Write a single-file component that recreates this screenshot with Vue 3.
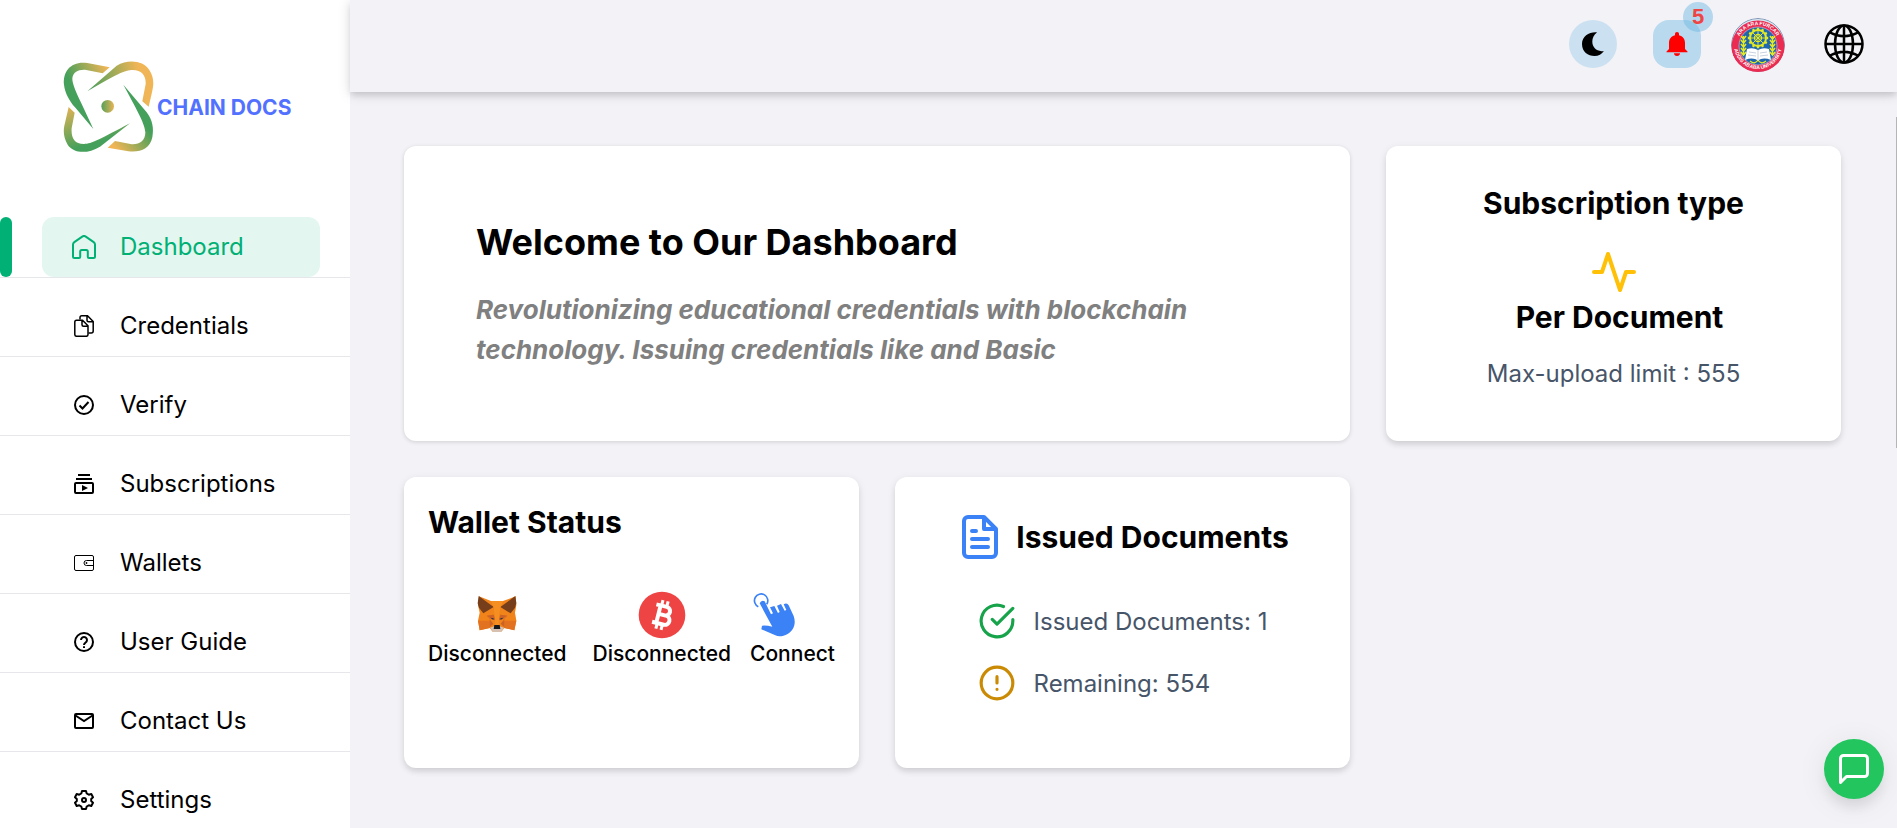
<script setup>
import { ref } from 'vue'

const active = ref('Dashboard')
const items = ['Dashboard', 'Credentials', 'Verify', 'Subscriptions', 'Wallets', 'User Guide', 'Contact Us', 'Settings']
const spokes = [0, 45, 90, 135]
const teeth = [0, 30, 60, 90, 120, 150, 180, 210, 240, 270, 300, 330]
const grains = [18, 22, 26, 30, 34]
</script>

<template>
  <div class="layout">
    <aside class="sidebar">
      <a class="brand" href="#">
        <svg class="brand-mark" viewBox="186 58 282 282" aria-hidden="true">
          <defs>
            <linearGradient id="g-a" gradientUnits="userSpaceOnUse" x1="200" y1="150" x2="325" y2="85">
              <stop offset=".15" stop-color="#44a05a" /><stop offset="1" stop-color="#f0b556" />
            </linearGradient>
            <linearGradient id="g-b" gradientUnits="userSpaceOnUse" x1="270" y1="150" x2="440" y2="110">
              <stop offset="0" stop-color="#4b9f5a" /><stop offset=".9" stop-color="#f0b556" />
            </linearGradient>
            <linearGradient id="g-c" gradientUnits="userSpaceOnUse" x1="440" y1="240" x2="345" y2="320">
              <stop offset=".1" stop-color="#44a05a" /><stop offset="1" stop-color="#f0b556" />
            </linearGradient>
            <linearGradient id="g-d" gradientUnits="userSpaceOnUse" x1="205" y1="200" x2="240" y2="320">
              <stop offset="0" stop-color="#e0b255" /><stop offset="1" stop-color="#44a05a" />
            </linearGradient>
            <linearGradient id="g-e"><stop offset="0" stop-color="#55a159" /><stop offset="1" stop-color="#e9b456" /></linearGradient>
          </defs>
          <path fill="url(#g-a)" d="M329 80 262 67C215 60 188 90 192 132C195 158 208 180 225 200L280 265L244 188C228 155 217 128 217 115C217 95 235 86 255 87L308 98Z" />
          <path fill="url(#g-b)" d="M262 152 350 75C385 55 430 60 448 88C462 110 462 130 456 155L446 198L427 182L437 130C438 105 425 88 398 88C375 88 350 100 262 152Z" />
          <path fill="url(#g-c)" d="M370 132 440 215C458 240 462 262 457 290C450 325 420 336 385 332L323 321L345 301L395 311C420 312 436 300 436 275C434 250 420 225 370 132Z" />
          <path fill="url(#g-d)" d="M390 248 300 318C260 342 220 337 203 312C190 290 190 270 193 255L206 199L224 216L215 262C213 290 222 310 252 310C275 310 300 295 390 248Z" />
          <circle cx="323" cy="197" r="19" fill="url(#g-e)" />
        </svg>
        <span>CHAIN DOCS</span>
      </a>

      <nav>
        <ul class="menu">
          <li v-for="item in items" :key="item" :class="{ active: item === active }">
            <a href="#" @click.prevent="active = item">
              <svg v-if="item === 'Dashboard'" class="icon home" viewBox="0 0 24 24">
                <path d="M1 9.6Q1 8 2.3 7.1L10.6 1.4Q12 .5 13.4 1.4L21.7 7.1Q23 8 23 9.6V21.5Q23 23 21.5 23H17Q15.8 23 15.8 21.8V16.5Q15.8 15 14.3 15H9.7Q8.200 15 8.200 16.5V21.800Q8.200 23 7 23H2.500Q1 23 1 21.500Z" />
              </svg>
              <svg v-else-if="item === 'Credentials'" class="icon thin" viewBox="0 0 20 22">
                <path d="M6 4.500V2.500Q6 .8 7.700.8H13.500L19.200 6.500V16Q19.200 18 17.300 18H14.500M13 1V5.200Q13 6.700 14.500 6.700H19" />
                <path d="M2.500 5.200H8.500L14 10.700V19.500Q14 21.300 12.200 21.300H2.700Q.8 21.300.8 19.500V7Q.8 5.200 2.500 5.200ZM8 5.400V9.700Q8 11.200 9.500 11.200H13.800" />
              </svg>
              <svg v-else-if="item === 'Verify'" class="icon" viewBox="0 0 20 20">
                <circle cx="10" cy="10" r="9" /><path d="M5.500 10.500 8.500 13.500 14.500 7" />
              </svg>
              <svg v-else-if="item === 'Subscriptions'" class="icon" viewBox="0 0 20 20">
                <path d="M4 1H16M2 5H18" /><rect x="1" y="9" width="18" height="10" rx="1" /><path class="solid" d="M8 11 14 14 8 17Z" />
              </svg>
              <svg v-else-if="item === 'Wallets'" class="icon fine" viewBox="0 0 20 20">
                <rect x=".5" y="2.500" width="19" height="15" rx="1.500" /><path d="M19.500 7.500H12.500A2.500 2.500 0 0 0 12.500 12.500H19.500" /><circle class="solid" cx="12.500" cy="10" r=".9" />
              </svg>
              <svg v-else-if="item === 'User Guide'" class="icon" viewBox="0 0 20 20">
                <circle cx="10" cy="10" r="9" /><path d="M7 8A3 3 0 1 1 11.500 10.600Q10 11.500 10 13" /><path d="M10 14.200V16" />
              </svg>
              <svg v-else-if="item === 'Contact Us'" class="icon" viewBox="0 0 20 20">
                <rect x="1" y="3" width="18" height="14" rx="1" /><path d="M1.500 4.500 10 10 18.500 4.500" />
              </svg>
              <svg v-else class="icon" viewBox="0 0 20 20">
                <path stroke-linejoin="round" d="M8 1H12L12.700 3.500 14.800 4.700 17.300 4 19 7.300 17.200 9V11L19 12.700 17.300 16 14.800 15.300 12.700 16.500 12 19H8L7.300 16.500 5.200 15.300 2.700 16 1 12.700 2.800 11V9L1 7.300 2.700 4 5.200 4.700 7.300 3.500Z" /><circle cx="10" cy="10" r="2" />
              </svg>
              <span>{{ item }}</span>
            </a>
          </li>
        </ul>
      </nav>
    </aside>

    <div class="page">
      <header class="topbar">
        <button class="round moon" aria-label="Dark mode">
          <svg viewBox="0 0 24 24"><path d="M16 .4C8.500-.3 1 4.200 1 12S7 24 13.500 24C17.500 24 21 22 22.900 18.900C16 20.300 11.300 15.500 11.300 9.600C11.300 6 13 2.500 16 .4Z" /></svg>
        </button>
        <button class="round bell" aria-label="Notifications">
          <svg viewBox="0 0 24 24"><path d="M12 24Q14.800 24 15 21.300H9Q9.200 24 12 24ZM20 17V11C20 7 17.800 4.200 14 3.300V1.800Q14 0 12 0T10 1.800V3.300C6.200 4.200 4 7 4 11V17L1.500 19.500V20.300H22.500V19.500Z" /></svg>
          <span class="badge">5</span>
        </button>
        <button class="avatar" aria-label="Profile">
          <svg viewBox="0 0 54 54">
            <defs>
              <path id="arc-top" d="M6 28A21 21 0 0 1 48 28" />
              <path id="arc-bottom" d="M3 27A24 24 0 0 0 51 27" />
            </defs>
            <circle cx="27" cy="27" r="26.500" fill="#d8e8f2" stroke="#35588a" stroke-width=".6" />
            <circle cx="27" cy="29" r="26.500" fill="#ea2c52" />
            <circle cx="27" cy="28" r="19" fill="#1e66ad" stroke="#d9d2e4" stroke-width=".6" />
            <text class="seal-text"><textPath href="#arc-top" startOffset="50%">ARA ARA FURCAR</textPath></text>
            <text class="seal-text"><textPath href="#arc-bottom" startOffset="50%">ADDIS ABABA UNIVERSITY</textPath></text>
            <g stroke="#e4ea25" fill="none">
              <circle cx="27" cy="20" r="8" stroke-width="2" />
              <path v-for="t in teeth" :key="t" d="M27 9.800V12" stroke-width="2.400" :transform="`rotate(${t} 27 20)`" />
              <path v-for="s in spokes" :key="s" d="M27 13V27" stroke-width=".9" :transform="`rotate(${s} 27 20)`" />
              <circle cx="27" cy="20" r="3.500" stroke-width="1.300" />
              <path v-for="g in grains" :key="g" stroke-width="1.700" :d="`M10 ${g}L12.500 ${g + 3}L15 ${g}M39 ${g}L41.500 ${g + 3}L44 ${g}`" />
              <path d="M12.500 18V36M41.500 18V36M19 43Q24 47 27 42Q30 47 35 43" stroke-width="1.300" />
            </g>
            <path d="M16 31Q22 29 27 32Q32 29 38 31L40 42Q32 39 27 42.500Q22 39 14 42Z" fill="#fff" />
            <path d="M27 32V42M18 34 25 35M17 37 25 38M29 35 36 34M29 38 37 37" stroke="#9fb4c8" stroke-width=".6" fill="none" />
          </svg>
        </button>
        <button class="globe" aria-label="Language">
          <svg viewBox="0 0 48 48">
            <circle cx="24" cy="24" r="18.500" /><ellipse cx="24" cy="24" rx="9" ry="18.500" />
            <path d="M24 5.500V42.500M5.500 24H42.500M10 12.500Q24 20 38 12.500M10 35.500Q24 28 38 35.500" />
          </svg>
        </button>
      </header>

      <main class="cards">
        <section class="card welcome">
          <h1>Welcome to Our Dashboard</h1>
          <p>Revolutionizing educational credentials with blockchain technology. Issuing credentials like and Basic</p>
        </section>

        <section class="card subscription">
          <h2>Subscription type</h2>
          <svg class="line pulse" viewBox="0 0 24 24"><path d="M22 12H18L15 21 9 3 6 12H2" /></svg>
          <h2 class="plan">Per Document</h2>
          <p>Max-upload limit : 555</p>
        </section>

        <section class="card wallet">
          <h2>Wallet Status</h2>
          <div class="wallets">
            <div class="pair">
              <div class="status">
                <svg viewBox="252 393 144 144">
                  <path fill="#f08319" d="M270 409 306 423H342L380 409 382 435 378 458 382 482 376 511 346 504 337 515H311L302 504 272 511 267 482 272 458 267 435Z" />
                  <path fill="#763e1a" d="M269 408 314 441 283 460 270 443 266 430ZM379 408 334 441 365 460 378 443 382 430Z" />
                  <path fill="#e2721f" d="M267 482H302V504L272 511ZM382 482H346V504L376 511ZM293 467 314 464 319 480 302 478ZM355 467 334 464 329 480 346 478Z" />
                  <path fill="#f58f22" d="M314 441 306 423H342L334 441 331 464 329 497H319L317 464Z" />
                  <path fill="#cc6228" d="M293 467 314 464 318 481ZM355 467 334 464 330 481ZM302 478 313 491 302 502ZM346 478 335 491 346 502Z" />
                  <path fill="#2b3443" d="M304 473 314 475 313 480ZM344 473 334 475 335 480Z" />
                  <path fill="#d7c1b3" d="M303 503 316 499H332L345 503 336 516H312Z" />
                  <path fill="#17191c" d="M316 495H332L334 507H314Z" />
                </svg>
                <span>Disconnected</span>
              </div>
              <div class="status">
                <svg viewBox="747 393 144 144">
                  <circle cx="819" cy="465" r="70" fill="#ef4444" />
                  <g transform="rotate(14 819 465)" fill="none" stroke="#fff" stroke-width="12">
                    <path d="M808 438V492M795 438H827A13 13 0 0 1 827 464H808M827 464H831A14 14 0 0 1 831 492H795" />
                    <path d="M811 421V438M827 421V438M811 492V509M827 492V509" stroke-width="9" />
                  </g>
                </svg>
                <span>Disconnected</span>
              </div>
            </div>
            <button class="status connect">
              <svg viewBox="1074 393 144 144">
                <path fill="none" stroke="#3b82f6" stroke-width="5" d="M1099 440A20 20 0 1 1 1124 433" />
                <path fill="#3b82f6" d="M1103 430Q1108 419 1118 424L1137 463 1143 460 1134 442 1147 438 1158 459 1163 456 1155 437 1167 432 1178 452 1183 450 1175 433Q1185 427 1190 436L1205 468C1213 490 1205 512 1188 521C1172 530 1160 531 1150 526L1108 508 1110 497Q1125 496 1141 500Z" />
              </svg>
              <span>Connect</span>
            </button>
          </div>
        </section>

        <section class="card issued">
          <div class="issued-head">
            <svg class="line file" viewBox="0 0 24 24"><path d="M14 2H6A2 2 0 0 0 4 4V20A2 2 0 0 0 6 22H18A2 2 0 0 0 20 20V8ZM14 2V8H20M16 13H8M16 17H8M10 9H8" /></svg>
            <h2>Issued Documents</h2>
          </div>
          <ul>
            <li>
              <svg class="line ok" viewBox="0 0 24 24"><path d="M22 11.080V12A10 10 0 1 1 16.070 2.860M22 4 12 14.010 9 11.010" /></svg>
              <span>Issued Documents: 1</span>
            </li>
            <li>
              <svg class="line warn" viewBox="0 0 24 24"><circle cx="12" cy="12" r="10" /><path d="M12 8V12M12 16H12.010" /></svg>
              <span>Remaining: 554</span>
            </li>
          </ul>
        </section>
      </main>
    </div>

    <div class="scroll-thumb"></div>
    <button class="chat" aria-label="Open chat">
      <svg viewBox="0 0 24 24"><path d="M21 15A2 2 0 0 1 19 17H7L3 21V5A2 2 0 0 1 5 3H19A2 2 0 0 1 21 5Z" /></svg>
    </button>
  </div>
</template>

<style>
body {
  margin: 0;
  background: #f3f2f7;
}
</style>

<style scoped>
.layout {
  display: flex;
  height: 100vh;
  overflow: hidden;
  font-family: Inter, "Liberation Sans", sans-serif;
  color: #000;
  background: #f3f2f7;
}
h1, h2, p, ul {
  margin: 0;
  padding: 0;
}
ul {
  list-style: none;
}
button {
  border: 0;
  padding: 0;
  background: none;
  font: inherit;
  color: inherit;
  cursor: pointer;
}
svg {
  display: block;
  flex: none;
}
a {
  color: inherit;
  text-decoration: none;
}

.sidebar {
  flex: none;
  width: 350px;
  background: #fff;
}
.brand {
  display: flex;
  align-items: center;
  gap: 1px;
  height: 94px;
  padding: 60px 0 63px 62px;
  font-size: 21px;
  font-weight: 700;
  color: #5271ff;
}
.brand-mark {
  width: 94px;
  height: 94px;
}
.menu li {
  position: relative;
  margin-bottom: 18px;
  padding: 0 30px 0 42px;
  border-bottom: 1px solid #e5e7eb;
}
.menu a {
  display: flex;
  align-items: center;
  gap: 24px;
  height: 60px;
  padding-left: 30px;
  border-radius: 12px;
  font-size: 24px;
  line-height: 36px;
  font-weight: 400;
}
.menu .active::before {
  content: "";
  position: absolute;
  left: 0;
  top: 0;
  width: 12px;
  height: 60px;
  border-radius: 6px;
  background: #00b074;
}
.menu .active a {
  color: #00b074;
  background: #e3f6f0;
}
.icon {
  width: 20px;
  height: 22px;
  margin: 0 2px;
  fill: none;
  stroke: currentColor;
  stroke-width: 2;
}
.icon.home {
  width: 24px;
  height: 24px;
  margin: 0;
}
.icon.thin {
  stroke-width: 1.500;
}
.icon.fine {
  stroke-width: 1;
}
.solid {
  fill: currentColor;
  stroke: none;
}

.page {
  flex: 1;
  min-width: 0;
}
.topbar {
  display: flex;
  align-items: center;
  justify-content: flex-end;
  gap: 30px;
  box-sizing: border-box;
  height: 92px;
  padding: 0 29px 4px 0;
  box-shadow: 0 4px 6px -1px rgba(0, 0, 0, .1), 0 2px 12px rgba(0, 0, 0, .15);
}
.round {
  display: grid;
  place-items: center;
  width: 48px;
  height: 48px;
}
.round svg {
  width: 24px;
  height: 24px;
}
.moon {
  border-radius: 50%;
  background: #cbe1f1;
}
.bell {
  position: relative;
  margin-left: 6px;
  border-radius: 16px;
  background: #b8d9ee;
}
.bell svg {
  fill: #f00;
}
.badge {
  position: absolute;
  top: -18px;
  right: -12px;
  width: 30px;
  height: 30px;
  border-radius: 50%;
  background: rgba(105, 182, 224, .45);
  font-size: 22px;
  line-height: 30px;
  font-weight: 700;
  font-family: "Liberation Sans", sans-serif;
  color: #ef4444;
}
.avatar {
  padding-top: 2px;
}
.avatar svg {
  width: 54px;
  height: 54px;
  border-radius: 50%;
}
.seal-text {
  font: 700 5px "Liberation Sans", sans-serif;
  fill: #fff;
  text-anchor: middle;
}
.globe {
  margin-left: 5px;
}
.globe svg {
  width: 48px;
  height: 48px;
  fill: none;
  stroke: #000;
  stroke-width: 2.500;
}

.cards {
  display: grid;
  grid-template-columns: repeat(3, minmax(0, 1fr));
  gap: 36px;
  padding: 54px 56px 54px 54px;
}
.card {
  border-radius: 12px;
  background: #fff;
  box-shadow: 0 4px 6px -1px rgba(0, 0, 0, .1), 0 2px 8px rgba(0, 0, 0, .08);
}
h2 {
  font-size: 30px;
  line-height: 42px;
  font-weight: 700;
}
.welcome {
  grid-column: span 2;
  padding: 73px 72px 71px;
  box-shadow: 0 1px 4px rgba(0, 0, 0, .15);
}
.welcome h1 {
  margin-bottom: 25px;
  font-size: 36px;
  line-height: 46px;
  font-weight: 700;
}
.welcome p {
  font-size: 26px;
  line-height: 40px;
  font-weight: 700;
  font-style: italic;
  color: #808080;
}
.line {
  fill: none;
  stroke: currentColor;
  stroke-width: 2;
  stroke-linecap: round;
  stroke-linejoin: round;
}
.subscription {
  display: flex;
  flex-direction: column;
  align-items: center;
  padding-top: 36px;
}
.pulse {
  width: 48px;
  height: 48px;
  margin-top: 24px;
  color: #ffc107;
}
.plan {
  padding-left: 12px;
}
.subscription p {
  margin-top: 18px;
  font-size: 24px;
  line-height: 36px;
  color: #475569;
}
.wallet {
  box-sizing: border-box;
  min-height: 291px;
  padding: 24px;
}
.wallets,
.pair {
  display: flex;
  justify-content: space-between;
}
.wallets {
  margin-top: 48px;
}
.pair {
  gap: 26px;
}
.status {
  display: flex;
  flex-direction: column;
  align-items: center;
  font-size: 21px;
  line-height: 30px;
  font-weight: 500;
}
.status svg {
  width: 48px;
  height: 48px;
}
.connect {
  align-items: flex-start;
}
.issued {
  padding-top: 36px;
}
.issued-head {
  display: flex;
  align-items: center;
  justify-content: center;
  gap: 12px;
}
.file {
  width: 48px;
  height: 48px;
  color: #3b82f6;
}
.issued ul {
  display: grid;
  gap: 24px;
  width: fit-content;
  margin: 41px auto 0;
}
.issued li {
  display: flex;
  align-items: center;
  gap: 18px;
  font-size: 24px;
  color: #475569;
}
.ok,
.warn {
  width: 38px;
  height: 38px;
  color: #16a34a;
}
.warn {
  color: #ca8a04;
}
.scroll-thumb {
  position: fixed;
  right: 0;
  top: 117px;
  width: 1px;
  height: 40%;
  background: #b5b5b8;
}
.chat {
  position: fixed;
  right: 13px;
  bottom: 29px;
  display: grid;
  place-items: center;
  width: 60px;
  height: 60px;
  border-radius: 50%;
  background: #22c55e;
  box-shadow: 0 10px 15px -3px rgba(0, 0, 0, .1), 0 4px 30px rgba(0, 0, 0, .08);
}
.chat svg {
  width: 36px;
  height: 36px;
  fill: none;
  stroke: #fff;
  stroke-width: 2;
  stroke-linejoin: round;
}
</style>
